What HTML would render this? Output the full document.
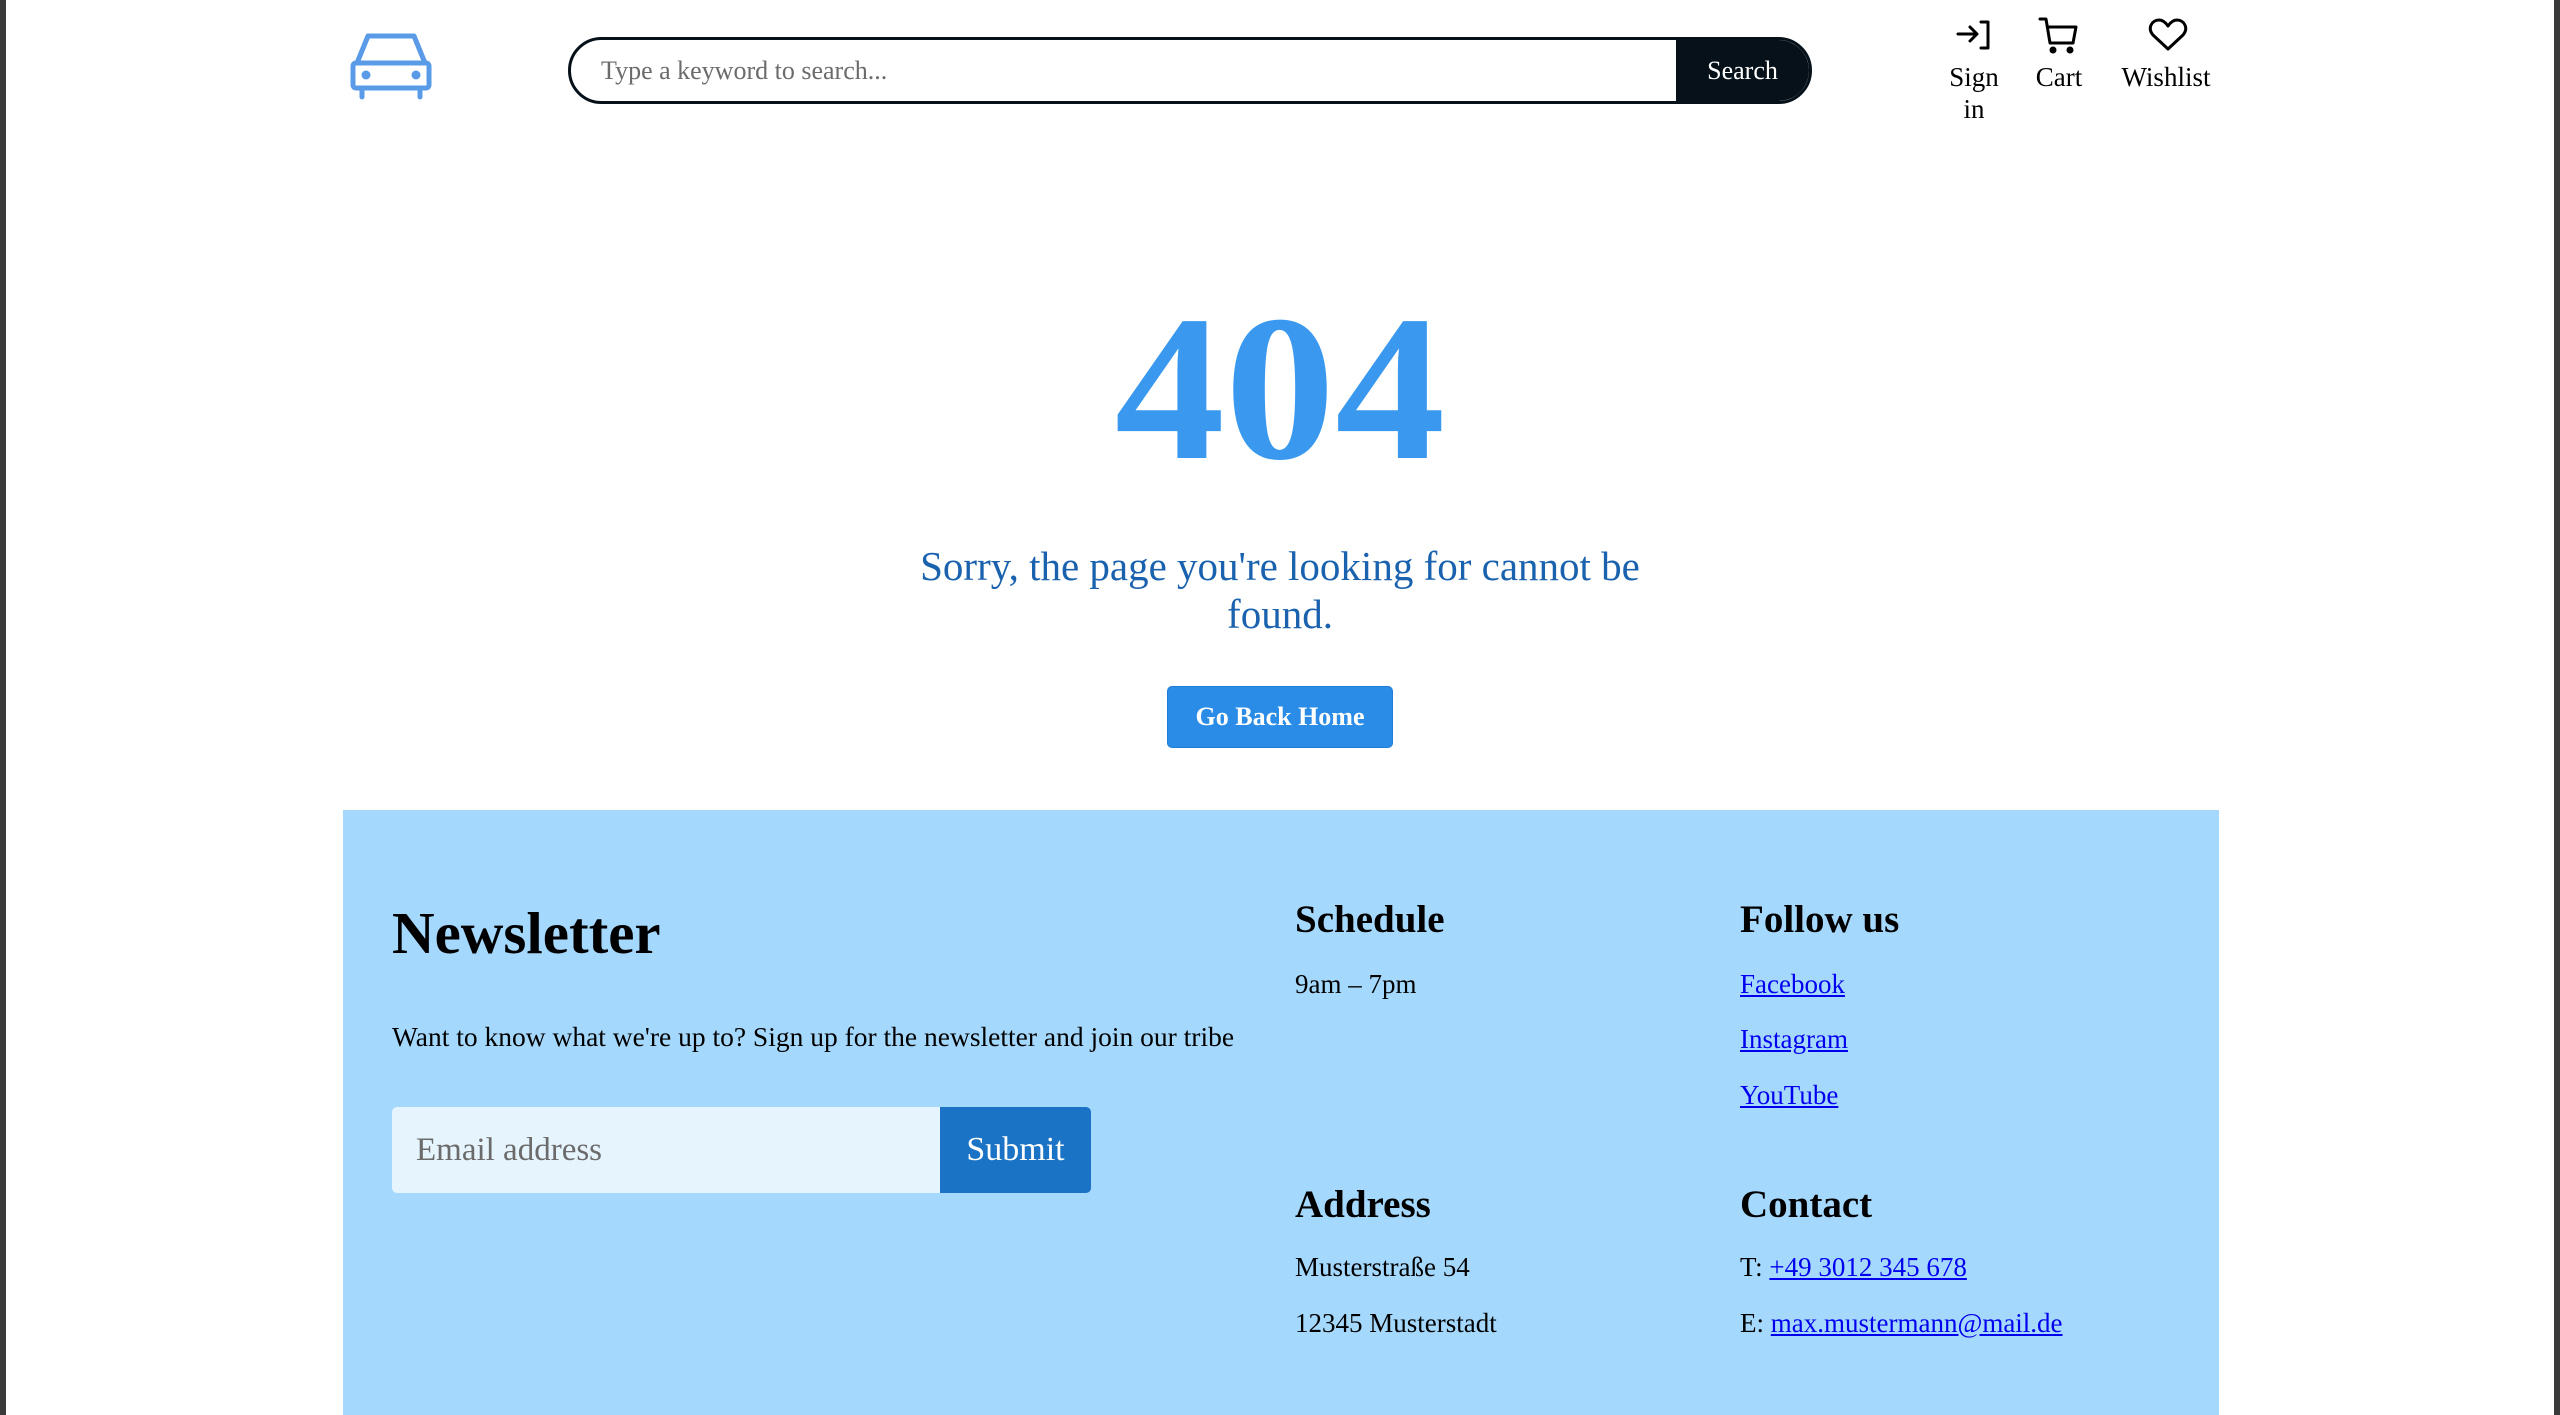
<!DOCTYPE html>
<html><head><meta charset="utf-8"><style>
html,body{margin:0;padding:0;}
body{width:2560px;height:1415px;position:relative;background:#fff;overflow:hidden;font-family:"Liberation Serif",serif;color:#000;}
.edge{position:absolute;top:0;bottom:0;width:6px;background:#3a3a3a;}
.a{position:absolute;white-space:nowrap;}
a{color:#0000ee;text-decoration:underline;}
</style></head><body>
<div class="edge" style="left:0"></div><div class="edge" style="right:0"></div>

<svg class="a" style="left:348px;top:30px" width="90" height="74" viewBox="348 30 90 74" fill="none" stroke="#5a9be8" stroke-width="5" stroke-linecap="round" stroke-linejoin="round">
<path d="M357 63 L368 36 L414 36 L425 63"/>
<rect x="353" y="63" width="76" height="25" rx="3"/>
<path d="M362 88 V97 M420 88 V97"/>
<circle cx="366" cy="75" r="4.5" fill="#5a9be8" stroke="none"/><circle cx="416" cy="75" r="4.5" fill="#5a9be8" stroke="none"/>
</svg>

<div class="a" style="left:568px;top:37px;width:1244px;height:67px;box-sizing:border-box;border:3px solid #06111a;border-radius:34px;overflow:hidden;">
<div class="a" style="left:30px;top:16px;font-size:26px;color:#6b6b6b;">Type a keyword to search...</div>
<div class="a" style="right:0;top:0;width:133px;height:100%;background:#06111a;color:#fff;font-size:26px;line-height:61px;text-align:center;">Search</div>
</div>

<svg class="a" style="left:1956px;top:18px" width="36" height="34" viewBox="0 0 36 34" fill="none" stroke="#000" stroke-width="3" stroke-linecap="round" stroke-linejoin="round">
<path d="M2 16 H20 M14 9 L21 16 L14 23 M25 4 H32 V30 H25"/></svg>
<svg class="a" style="left:2038px;top:16px" width="42" height="38" viewBox="0 0 42 38" fill="none" stroke="#000" stroke-width="3" stroke-linecap="round" stroke-linejoin="round">
<path d="M2 3 H8 L12 27 H35 M10 11 H38 L35 27"/><circle cx="15" cy="34" r="2" fill="#000"/><circle cx="32" cy="34" r="2" fill="#000"/></svg>
<svg class="a" style="left:2148px;top:18px" width="40" height="34" viewBox="0 0 40 34" fill="none" stroke="#000" stroke-width="3" stroke-linejoin="round">
<path d="M20 31 L5 17 C-1 10 4 2 11 2 C15 2 18 5 20 8 C22 5 25 2 29 2 C36 2 41 10 35 17 Z"/></svg>
<div class="a" style="left:1944px;top:61px;width:60px;text-align:center;font-size:27px;line-height:32px;">Sign<br>in</div>
<div class="a" style="left:2029px;top:61px;width:60px;text-align:center;font-size:27px;line-height:32px;">Cart</div>
<div class="a" style="left:2106px;top:61px;width:120px;text-align:center;font-size:27px;line-height:32px;">Wishlist</div>

<div class="a" style="left:0;width:2560px;top:283px;text-align:center;font-size:208px;line-height:210px;font-weight:bold;color:#3a99ee;transform:scaleX(1.06);">404</div>
<div class="a" style="left:880px;width:800px;top:542px;white-space:normal;text-align:center;font-size:41px;line-height:48px;color:#1a62ae;">Sorry, the page you're looking for cannot be found.</div>
<div class="a" style="left:1167px;top:686px;width:226px;height:62px;box-sizing:border-box;background:#2a8ce6;border:1px solid #1f7dd6;border-radius:5px;color:#fff;font-weight:bold;font-size:26px;line-height:60px;text-align:center;">Go Back Home</div>

<div class="a" style="left:343px;top:810px;width:1876px;height:605px;background:#a5d8fd;">
<div class="a" style="left:49px;top:88px;font-size:59px;font-weight:bold;line-height:70px;">Newsletter</div>
<div class="a" style="left:49px;top:211px;font-size:27.5px;line-height:32px;">Want to know what we're up to? Sign up for the newsletter and join our tribe</div>
<div class="a" style="left:49px;top:297px;width:549px;height:86px;background:#e6f4fd;border-radius:5px 0 0 5px;"></div>
<div class="a" style="left:73px;top:322px;font-size:33px;color:#6b6b6b;">Email address</div>
<div class="a" style="left:597px;top:297px;width:151px;height:86px;background:#1a73c4;border-radius:0 5px 5px 0;color:#fff;font-size:34px;line-height:86px;text-align:center;">Submit</div>

<div class="a" style="left:952px;top:87px;font-size:39px;font-weight:bold;line-height:46px;">Schedule</div>
<div class="a" style="left:952px;top:158px;font-size:27px;line-height:32px;">9am – 7pm</div>
<div class="a" style="left:952px;top:372px;font-size:39px;font-weight:bold;line-height:46px;">Address</div>
<div class="a" style="left:952px;top:441px;font-size:27px;line-height:32px;">Musterstraße 54</div>
<div class="a" style="left:952px;top:497px;font-size:27px;line-height:32px;">12345 Musterstadt</div>

<div class="a" style="left:1397px;top:87px;font-size:39px;font-weight:bold;line-height:46px;">Follow us</div>
<div class="a" style="left:1397px;top:158px;font-size:27px;line-height:32px;"><a>Facebook</a></div>
<div class="a" style="left:1397px;top:213px;font-size:27px;line-height:32px;"><a>Instagram</a></div>
<div class="a" style="left:1397px;top:269px;font-size:27px;line-height:32px;"><a>YouTube</a></div>
<div class="a" style="left:1397px;top:372px;font-size:39px;font-weight:bold;line-height:46px;">Contact</div>
<div class="a" style="left:1397px;top:441px;font-size:27px;line-height:32px;">T: <a>+49 3012 345 678</a></div>
<div class="a" style="left:1397px;top:497px;font-size:27px;line-height:32px;">E: <a>max.mustermann@mail.de</a></div>
</div>
</body></html>
